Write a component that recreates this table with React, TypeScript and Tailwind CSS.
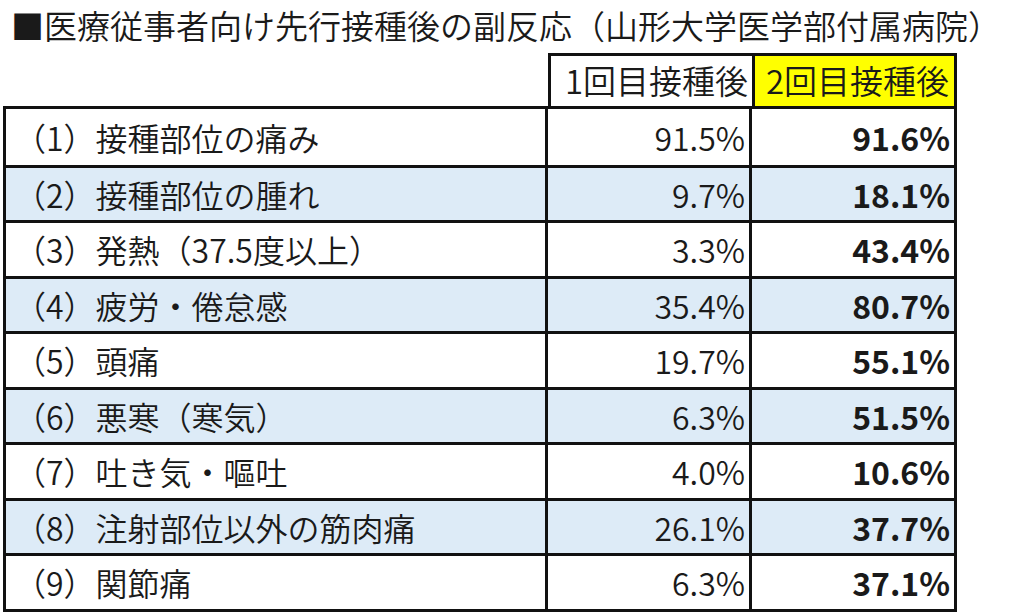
import React from "react";

const rows: [string, string, string][] = [
  ["（1）接種部位の痛み", "91.5%", "91.6%"],
  ["（2）接種部位の腫れ", "9.7%", "18.1%"],
  ["（3）発熱（37.5度以上）", "3.3%", "43.4%"],
  ["（4）疲労・倦怠感", "35.4%", "80.7%"],
  ["（5）頭痛", "19.7%", "55.1%"],
  ["（6）悪寒（寒気）", "6.3%", "51.5%"],
  ["（7）吐き気・嘔吐", "4.0%", "10.6%"],
  ["（8）注射部位以外の筋肉痛", "26.1%", "37.7%"],
  ["（9）関節痛", "6.3%", "37.1%"],
];

export default function App() {
  return (
    <div
      className="w-[1024px] h-[615px] bg-white text-[#1a1a1a] overflow-hidden font-[350]"
      style={{ fontFamily: '"Noto Sans CJK JP", "Noto Sans", sans-serif' }}
    >
      <div className="pl-[11px] pt-[5px] h-[53px] text-[33px] leading-[40px] whitespace-nowrap">
        ■医療従事者向け先行接種後の副反応（山形大学医学部付属病院）
      </div>
      <div className="ml-[3px] w-[954px]">
        <div className="flex h-[56px]">
          <div className="w-[545px]" />
          <div className="w-[207px] border-[3px] border-[#111] flex items-center justify-end pr-[4px] text-[33px]">
            1回目接種後
          </div>
          <div className="w-[205px] -ml-[3px] border-[3px] border-[#111] bg-[#ffff00] flex items-center justify-end pr-[5px] text-[33px]">
            2回目接種後
          </div>
        </div>
        <div className="border-[3px] border-[#111] -mt-[3px]">
          {rows.map((r, i) => (
            <div
              key={i}
              className={`flex h-[55.5px] text-[32px] ${i > 0 ? "border-t-[3px] border-[#111]" : ""} ${i % 2 === 1 ? "bg-[#ddebf7]" : "bg-white"}`}
            >
              <div className="w-[542px] flex items-center pl-[8px] border-r-[3px] border-[#111] whitespace-nowrap">
                {r[0]}
              </div>
              <div className="w-[204px] flex items-center justify-end pr-[4px] border-r-[3px] border-[#111]">
                {r[1]}
              </div>
              <div className="flex-1 flex items-center justify-end pr-[4px] font-bold">
                {r[2]}
              </div>
            </div>
          ))}
        </div>
      </div>
    </div>
  );
}
